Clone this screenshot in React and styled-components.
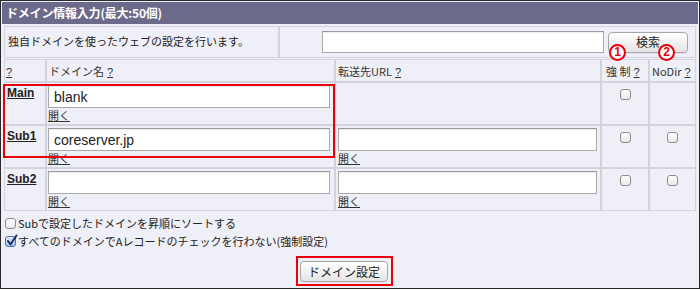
import React from "react";
import styled, { createGlobalStyle } from "styled-components";

const Global = createGlobalStyle`
  html, body { margin: 0; padding: 0; background: #fff; }
  body { font-family: "Noto Sans CJK JP", "Liberation Sans", sans-serif; }
  * { box-sizing: border-box; }
`;

const Panel = styled.div`
  position: relative;
  width: 700px;
  height: 289px;
  border: 1px solid #2a2a2a;
  background: #efeff7;
  padding: 1px 3px;
  font-size: 11px;
  color: #222;
`;

const Header = styled.div`
  height: 22px;
  margin: 0 -2px;
  padding-left: 4px;
  background: #6c6a8a;
  color: #fff;
  font-weight: bold;
  font-size: 12px;
  line-height: 22px;
  letter-spacing: -0.2px;
`;

const Table = styled.table`
  width: 100%;
  border-collapse: separate;
  border-spacing: 0;
  table-layout: fixed;
  margin-top: ${(p) => p.$mt || 0}px;
`;

const Cell = styled.td`
  border: 1px solid #d3d3dd;
  padding: ${(p) => p.$pad || "0 2px"};
  vertical-align: ${(p) => p.$va || "top"};
  text-align: ${(p) => p.$align || "left"};
  height: ${(p) => (p.$h ? `${p.$h}px` : "auto")};
`;

const SearchBox = styled.div`
  display: flex;
  justify-content: flex-end;
  align-items: center;
  gap: 4px;
  padding-right: 7px;
`;

const TextInput = styled.input`
  display: block;
  width: ${(p) => p.$w}px;
  height: ${(p) => p.$h || 23}px;
  border: 1px solid #a9a9a9;
  border-top-color: #9a9a9a;
  box-shadow: inset 0 1px 1px rgba(0, 0, 0, 0.08);
  background: #fff;
  padding: 0 5px;
  font-family: "Liberation Sans", Arial, sans-serif;
  font-size: 14px;
  color: #222;
  outline: none;
`;

const Button = styled.button`
  width: ${(p) => p.$w}px;
  height: 21px;
  border: 1px solid #a6a6a6;
  border-radius: 4px;
  background: linear-gradient(#ffffff, #e4e4e4);
  font-family: "Noto Sans CJK JP", sans-serif;
  font-size: 12px;
  color: #222;
  padding: 0;
  line-height: 18px;
  box-shadow: 0 1px 0 rgba(0, 0, 0, 0.05);
`;

const HelpLink = styled.a`
  color: #333;
  text-decoration: underline;
  margin-left: 3px;
  font-family: "Liberation Sans", sans-serif;
`;

const HeadText = styled.span`
  color: #333;
  white-space: nowrap;
`;

const RowLabel = styled.a`
  display: block;
  font-family: "Liberation Sans", Arial, sans-serif;
  font-weight: bold;
  font-size: 12px;
  color: #222;
  text-decoration: underline;
  line-height: 14px;
  padding-top: 3px;
`;

const OpenLink = styled.a`
  display: block;
  color: #333;
  text-decoration: underline;
  font-size: 11px;
  line-height: 14px;
`;

const Box = styled.span`
  position: relative;
  display: inline-block;
  width: 11px;
  height: 11px;
  border: 1px solid ${(p) => (p.$on ? "#4c6fae" : "#8d8d8d")};
  border-radius: 3px;
  background: ${(p) =>
    p.$on
      ? "linear-gradient(#dbe8fb, #a7c4ee)"
      : "linear-gradient(#ffffff, #e9e9e9)"};
  flex: none;
`;

const CheckMark = styled.svg`
  position: absolute;
  left: 0px;
  top: -3px;
`;

const Checkbox = ({ on }) => (
  <Box $on={on}>
    {on && (
      <CheckMark width="12" height="13" viewBox="0 0 12 13">
        <path d="M2 7 L4.5 10.5 L10.5 1.5" fill="none" stroke="#1c2d5c" strokeWidth="2" strokeLinecap="round" strokeLinejoin="round" />
      </CheckMark>
    )}
  </Box>
);

const Options = styled.div`
  padding: 3px 1px 0;
`;

const OptionLine = styled.label`
  display: flex;
  align-items: center;
  gap: 2px;
  height: 18px;
  font-size: 11px;
  color: #222;
`;

const SubmitRow = styled.div`
  display: flex;
  justify-content: center;
  padding-right: 12px;
  margin-top: 11px;
`;

const RedBox = styled.div`
  position: absolute;
  border: 2px solid #e8000b;
  pointer-events: none;
`;

const Badge = styled.span`
  position: absolute;
  width: 17px;
  height: 17px;
  border: 2px solid #e8000b;
  border-radius: 50%;
  background: #fff;
  color: #e8000b;
  font-family: "Liberation Sans", Arial, sans-serif;
  font-weight: bold;
  font-size: 12px;
  line-height: 13px;
  text-align: center;
`;

const rows = [
  { label: "Main", domain: "blank", url: null, force: true, nodir: false },
  { label: "Sub1", domain: "coreserver.jp", url: "", force: true, nodir: true },
  { label: "Sub2", domain: "", url: "", force: true, nodir: true },
];

export default function App() {
  return (
    <>
      <Global />
      <Panel>
        <Header>ドメイン情報入力(最大:50個)</Header>
        <Table $mt={2}>
          <colgroup>
            <col style={{ width: 275 }} />
            <col />
          </colgroup>
          <tbody>
            <tr>
              <Cell $h={32} $va="middle" $pad="0 3px 2px">
                独自ドメインを使ったウェブの設定を行います。
              </Cell>
              <Cell $h={32} $va="middle" $pad="0">
                <SearchBox>
                  <TextInput $w={282} $h={22} />
                  <Button $w={80}>検索</Button>
                </SearchBox>
              </Cell>
            </tr>
          </tbody>
        </Table>
        <Table $mt={1}>
          <colgroup>
            <col style={{ width: 42 }} />
            <col style={{ width: 289 }} />
            <col style={{ width: 266 }} />
            <col style={{ width: 48 }} />
            <col style={{ width: 47 }} />
          </colgroup>
          <tbody>
            <tr>
              <Cell $h={23} $va="middle" $pad="0 1px">
                <HelpLink style={{ marginLeft: 0 }}>?</HelpLink>
              </Cell>
              <Cell $va="middle">
                <HeadText>ドメイン名</HeadText>
                <HelpLink>?</HelpLink>
              </Cell>
              <Cell $va="middle">
                <HeadText>転送先URL</HeadText>
                <HelpLink>?</HelpLink>
              </Cell>
              <Cell $va="middle" $pad="0 0 0 4px">
                <HeadText>強 制</HeadText>
                <HelpLink>?</HelpLink>
              </Cell>
              <Cell $va="middle">
                <HeadText>NoDir</HeadText>
                <HelpLink>?</HelpLink>
              </Cell>
            </tr>
            {rows.map((r) => (
              <tr key={r.label}>
                <Cell $pad="0 2px">
                  <RowLabel>{r.label}</RowLabel>
                </Cell>
                <Cell $pad="2px 1px 2px">
                  <TextInput $w={282} defaultValue={r.domain} />
                  <OpenLink>開く</OpenLink>
                </Cell>
                <Cell $pad="2px 2px 2px">
                  {r.url !== null && (
                    <>
                      <TextInput $w={259} defaultValue={r.url} />
                      <OpenLink>開く</OpenLink>
                    </>
                  )}
                </Cell>
                <Cell $align="center" $pad="4px 0 0">
                  {r.force && <Checkbox />}
                </Cell>
                <Cell $align="center" $pad="4px 0 0">
                  {r.nodir && <Checkbox />}
                </Cell>
              </tr>
            ))}
          </tbody>
        </Table>
        <Options>
          <OptionLine>
            <Checkbox />
            Subで設定したドメインを昇順にソートする
          </OptionLine>
          <OptionLine>
            <Checkbox on />
            すべてのドメインでAレコードのチェックを行わない(強制設定)
          </OptionLine>
        </Options>
        <SubmitRow>
          <Button $w={88}>ドメイン設定</Button>
        </SubmitRow>
        <RedBox style={{ left: 2, top: 83, width: 332, height: 74 }} />
        <RedBox style={{ left: 295, top: 255, width: 97, height: 30 }} />
        <Badge style={{ left: 608, top: 43 }}>1</Badge>
        <Badge style={{ left: 657, top: 43 }}>2</Badge>
      </Panel>
    </>
  );
}
